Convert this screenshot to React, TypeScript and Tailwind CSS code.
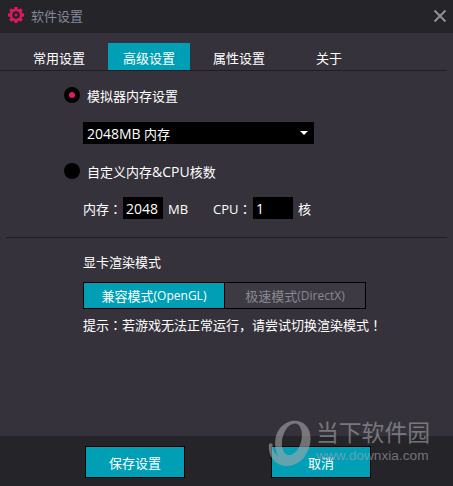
import React from "react";

const TEAL = "bg-[#009fb6]";

function Gear() {
  return (
    <svg width="18" height="18" viewBox="-9 -9 18 18" className="-mt-[3px] shrink-0" fill="#d91b5c">
      {[0, 45, 90, 135, 180, 225, 270, 315].map((a) => (
        <path key={a} d="M-2 -5 L-1.5 -8.1 H1.5 L2 -5 Z" transform={`rotate(${a})`} />
      ))}
      <circle r="5" fill="none" stroke="#d91b5c" strokeWidth="2.5" />
      <circle r="1.4" />
    </svg>
  );
}

// Traditional Chinese faces centre full-width punctuation in its cell.
function Mark({ children }: { children: string }) {
  return <span lang="zh-TW" className="font-['Noto_Sans_CJK_TC',sans-serif]">{children}</span>;
}

function Radio({ checked = false, children }: { checked?: boolean; children: React.ReactNode }) {
  return (
    <div className="flex h-4 items-center gap-[7px]">
      <span className="flex size-4 items-center justify-center rounded-full bg-black">
        {checked && <span className="size-1.5 rounded-full bg-[#dc1c60]" />}
      </span>
      <span className="pt-0.5">{children}</span>
    </div>
  );
}

function Watermark() {
  return (
    <div className="pointer-events-none absolute top-[419px] left-[266px] flex h-[50px] opacity-60">
      <svg width="50" height="50" viewBox="0 0 50 50" fill="#a6a6aa">
        <path
          fillRule="evenodd"
          d="M27 1.700 C38 1 45 9 44.500 20 C44 36 33 47 21 47 C10 47 1.500 38 3 25 C4 24 5.500 24 6.500 25 C6.500 30 8 34 12 37 C5 22 11 4 27 1.700 Z M29 4.500 C20 5 15 18 16 27 C17 35 22 38 27 35 C34 31 37 20 35.500 12 C34.500 7 32 4.500 29 4.500 Z"
        />
      </svg>
      <div className="flex flex-col whitespace-nowrap text-[#a6a6aa]">
        <span className="mt-[2px] text-[22.8px] leading-[24px]">当下软件园</span>
        <span className="mt-[3px] font-['Liberation_Sans',sans-serif] text-[13.7px] leading-[16px]">www.downxia.com</span>
      </div>
    </div>
  );
}

export default function App() {
  const tabs = ["常用设置", "高级设置", "属性设置", "关于"];
  return (
    <div lang="zh-CN" className="relative flex h-[486px] w-[453px] flex-col overflow-hidden bg-[#35323b] font-['Open_Sans','Noto_Sans_CJK_SC',sans-serif] text-[13px] leading-4 whitespace-nowrap text-white">
      <header className="flex h-[33px] shrink-0 items-center bg-[#242429] pr-1.5 pl-[7px] text-[#85889a]">
        <Gear />
        <span className="-mt-px ml-1.5">软件设置</span>
        <svg width="14" height="14" viewBox="0 0 14 14" className="-mt-0.5 ml-auto" stroke="#929294" strokeWidth="2">
          <path d="M1.500 1.500 L12.500 12.500 M12.500 1.500 L1.500 12.500" />
        </svg>
      </header>

      <nav className="mr-1.5 flex h-[38px] shrink-0 items-end gap-2 border-b border-[#201e25] pl-[18px]">
        {tabs.map((t, i) => (
          <div key={t} className={`flex h-[27px] w-[82px] items-center justify-center pt-[2px] ${i === 1 ? TEAL : ""}`}>
            {t}
          </div>
        ))}
      </nav>

      <main className="flex flex-1 flex-col">
        <section className="flex h-[166px] flex-col pt-4 pl-16">
          <Radio checked>模拟器内存设置</Radio>
          <div className="mt-[19px] ml-[19px] flex h-[22px] w-[231px] items-center justify-between bg-black pr-1.5 pl-1">
            <span className="pt-0.5">
              <span className="text-[14px]">2048MB</span> 内存
            </span>
            <svg width="8" height="4" viewBox="0 0 8 4" fill="white">
              <path d="M0 0H8L4 4Z" />
            </svg>
          </div>
          <div className="mt-[19px]">
            <Radio>
              自定义内存<span className="text-[14px]">&amp;CPU</span>核数
            </Radio>
          </div>
          <div className="mt-[18px] ml-[19px] flex h-[22px] items-center">
            <span className="w-10 pt-0.5">内存<Mark>：</Mark></span>
            <span className="flex h-[22px] w-10 items-center bg-black pt-0.5 pl-[3px] text-[14px]">2048</span>
            <span className="ml-[5px] w-[45px] pt-0.5">MB</span>
            <span className="w-10 pt-0.5">CPU<Mark>：</Mark></span>
            <span className="flex h-[22px] w-10 items-center bg-black pt-0.5 pl-[3px] text-[14px]">1</span>
            <span className="ml-[5px] pt-0.5">核</span>
          </div>
        </section>

        <section className="ml-1.5 mr-1.5 flex flex-col border-t border-[#201e25] pt-[16px] pl-[77px]">
          <span>显卡渲染模式</span>
          <div className="mt-[12px] flex h-[27px] w-[283px] border border-black">
            <div className={`flex w-[141px] items-center justify-center border-r border-black ${TEAL}`}>
              兼容模式<span className="text-[12px]">(OpenGL)</span>
            </div>
            <div className="flex flex-1 items-center justify-center bg-[#3d3a44] text-[#8b8990]">
              极速模式<span className="text-[12px]">(DirectX)</span>
            </div>
          </div>
          <span className="mt-2">
            提示<Mark>：</Mark>若游戏无法正常运行，请尝试切换渲染模式<Mark>！</Mark>
          </span>
        </section>
      </main>

      <footer className="flex h-[50px] shrink-0 gap-[86px] bg-[#242429] pt-2.5 pl-[85px]">
        <button className={`h-8 w-[100px] border border-black pt-px ${TEAL}`}>保存设置</button>
        <button className={`h-8 w-[100px] border border-black pt-px ${TEAL}`}>取消</button>
      </footer>

      <Watermark />
    </div>
  );
}
